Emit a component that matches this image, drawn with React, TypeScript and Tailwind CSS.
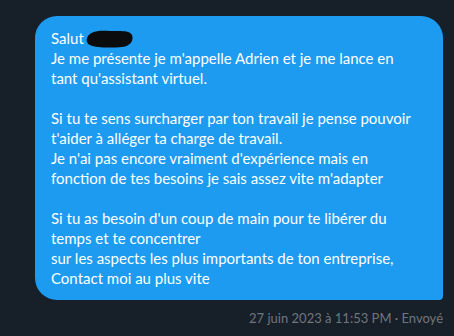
const lines = [
  "Je me présente je m'appelle Adrien et je me lance en",
  "tant qu'assistant virtuel.",
  "",
  "Si tu te sens surcharger par ton travail je pense pouvoir",
  "t'aider à alléger ta charge de travail.",
  "Je n'ai pas encore vraiment d'expérience mais en",
  "fonction de tes besoins je sais assez vite m'adapter",
  "",
  "Si tu as besoin d'un coup de main pour te libérer du",
  "temps et te concentrer",
  "sur les aspects les plus importants de ton entreprise,",
  "Contact moi au plus vite",
]

export default function App() {
  return (
    <div className="w-[454px] h-[336px] bg-[#171f29] pt-4 pl-[35px] pr-[11px] font-['Lato','Noto_Sans',sans-serif] overflow-hidden">
      <div className="bg-[#1d9bf0] text-white text-[15px] leading-5 rounded-[22px] rounded-br-[4px] px-4 py-3 whitespace-nowrap">
        <div className="flex items-center h-5">
          <span>Salut</span>
          {/* redacted name */}
          <svg width="48" height="20" viewBox="0 0 48 20" className="ml-[2px] mt-[1px]">
            <path d="M2 7 C5 2 14 1 24 2 C34 2 44 1 46 6 C48 11 45 17 36 18 C26 19 10 19 4 16 C0 14 0 10 2 7 Z" fill="#0b0c0e" />
          </svg>
        </div>
        {lines.map((l, i) => (
          <div key={i} className="h-5">{l}</div>
        ))}
      </div>
      <div className="text-right text-[13px] text-[#71767b] mt-[9px]">
        27 juin 2023 à 11:53 PM · Envoyé
      </div>
    </div>
  )
}
